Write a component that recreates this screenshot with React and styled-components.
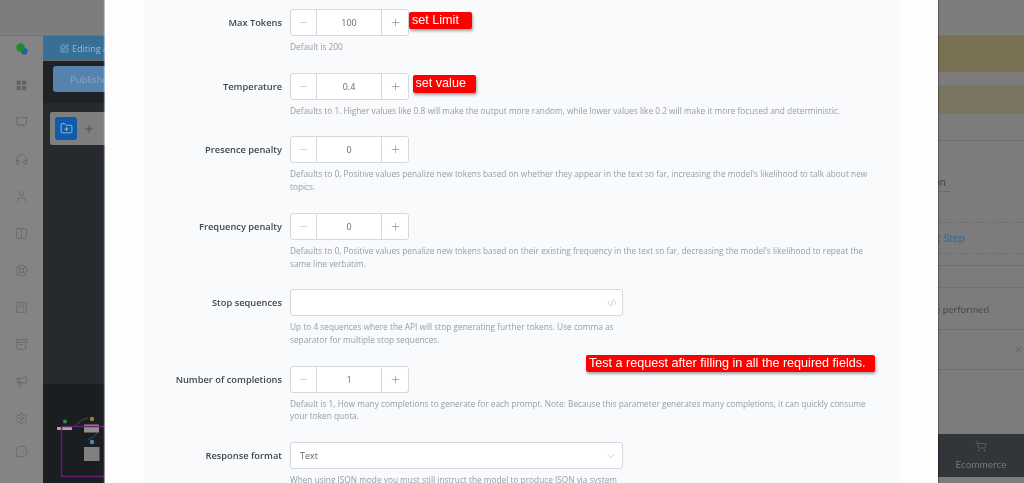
import React from "react";
import styled, { createGlobalStyle } from "styled-components";
import {
  Minus, Plus, CodeXml, ChevronDown, Presentation, Headphones, User, Columns2,
  LifeBuoy, SquareKanban, Archive, Megaphone, Settings, MessageCircleMore, ShoppingCart, X, FolderPlus, SquarePen,
} from "lucide-react";

const Global = createGlobalStyle`
  html, body { margin: 0; padding: 0; background: #808080; }
  * { box-sizing: border-box; }
`;

const Page = styled.div`
  position: relative;
  width: 1024px;
  height: 483px;
  overflow: hidden;
  font-family: "Open Sans", "Noto Sans", sans-serif;
  background: #7f7f7f;
  filter: blur(0.55px);
`;

const Backdrop = styled.div`
  display: grid;
  grid-template-rows: 36px 1fr;
  height: 100%;
`;
const TopBar = styled.div`
  background: #7d7d7d;
  border-bottom: 1px solid #747474;
`;
const Body = styled.div`
  display: grid;
  grid-template-columns: 43px 1fr 170px;
  min-height: 0;
`;
const Sidebar = styled.nav`
  background: #848484;
  display: flex;
  flex-direction: column;
  align-items: center;
  color: #626568;
`;
const SideItem = styled.div`
  height: ${(p) => p.$h || 37}px;
  margin-bottom: ${(p) => p.$mb || 0}px;
  flex: none;
  display: flex;
  align-items: center;
  justify-content: center;
`;
const Editor = styled.div`
  display: flex;
  flex-direction: column;
  min-width: 0;
  background: #26292d;
`;
const EditingBar = styled.div`
  height: 24px;
  flex: none;
  background: #386f96;
  color: #a4b9c9;
  font-size: 9px;
  display: flex;
  align-items: center;
  gap: 3px;
  padding-left: 17px;
  white-space: nowrap;
  overflow: hidden;
`;
const Toolbar = styled.div`
  height: 43px;
  flex: none;
  border-top: 1px solid #6a6a6a;
  background: #1f2225;
  padding: 5px 10px;
`;
const PublishButton = styled.div`
  width: 100px;
  height: 26px;
  border-radius: 3px;
  background: #5583ad;
  color: #8aa8c4;
  font-size: 9.5px;
  display: flex;
  align-items: center;
  padding-left: 17px;
`;
const Canvas = styled.div`
  flex: 1;
  padding: 9px 7px;
`;
const Tools = styled.div`
  width: 90px;
  height: 33px;
  background: #7f7f7f;
  border-radius: 2px;
  display: flex;
  align-items: center;
  gap: 6px;
  padding-left: 5px;
  color: #34373a;
`;
const FolderButton = styled.div`
  width: 22px;
  height: 23px;
  background: #0e5cad;
  border-radius: 3px;
  color: #b5c9de;
  display: flex;
  align-items: center;
  justify-content: center;
`;
const MiniMap = styled.div`
  height: 99px;
  flex: none;
  background: #1b1e21;
  svg { display: block; }
`;
const RightPanel = styled.aside`
  display: flex;
  flex-direction: column;
  background: #7c7c7c;
  color: #4a4a4a;
  font-size: 10px;
  font-family: "Lato", sans-serif;
`;
const Banner = styled.div`
  flex: none;
  height: ${(p) => p.$h}px;
  margin-bottom: ${(p) => p.$mb}px;
  background: ${(p) => p.$bg};
`;
const Section = styled.div`
  flex: none;
  height: ${(p) => p.$h}px;
  border-top: 1px ${(p) => p.$kind || "solid"} ${(p) => p.$line || "#6e6e6e"};
  display: flex;
  align-items: center;
  justify-content: flex-end;
  padding-right: ${(p) => p.$pr || 0}px;
  padding-bottom: ${(p) => p.$pb || 0}px;
  white-space: nowrap;
`;
const Condition = styled.span`
  border-bottom: 1px solid #6b6b6b;
  padding: 4px 4px 3px 40px;
  margin-right: 74px;
  font-size: 11px;
`;
const NextStep = styled.span`
  color: #3a6794;
  font-size: 11px;
`;
const EcommerceCard = styled.div`
  flex: none;
  height: 43px;
  margin-top: 5px;
  margin-left: 84px;
  background: #32363b;
  color: #74777b;
  font-size: 10px;
  line-height: 14px;
  display: flex;
  flex-direction: column;
  align-items: center;
  justify-content: center;
  gap: 5px;
`;

const Modal = styled.div`
  position: absolute;
  left: 105px;
  top: 0;
  width: 833px;
  height: 100%;
  background: #fdfdfe;
  overflow: hidden;
  padding: 0 38px 0 40px;
  box-shadow: -1px 0 1px rgba(255, 255, 255, 0.5), 1px 0 1px rgba(0, 0, 0, 0.25);
`;
const FormPanel = styled.div`
  background: #f9fafc;
  height: 100%;
  padding-top: 9px;
  color: #43484e;
`;
const Row = styled.div`
  display: grid;
  grid-template-columns: 137px 1fr;
  column-gap: 8px;
  margin-bottom: 19px;
`;
const Label = styled.label`
  font-size: 9.3px;
  font-weight: 600;
  color: #42474d;
  text-align: right;
  line-height: 27px;
  white-space: nowrap;
`;
const Help = styled.p`
  grid-column: 2;
  margin: 5px 0 0;
  font-size: 8.3px;
  line-height: 12.7px;
  color: #969ca4;
  max-width: ${(p) => p.$w || 585}px;
`;
const Stepper = styled.div`
  display: grid;
  grid-template-columns: 25px 66px 26px;
  width: 119px;
  height: 27px;
  background: #fff;
  border: 1px solid #d5d8dd;
  border-radius: 3px;
`;
const StepButton = styled.div`
  display: flex;
  align-items: center;
  justify-content: center;
  color: ${(p) => (p.$muted ? "#b3b7bd" : "#6d7278")};
`;
const StepValue = styled.div`
  border-left: 1px solid #d5d8dd;
  border-right: 1px solid #d5d8dd;
  display: flex;
  align-items: center;
  justify-content: center;
  font-size: 9px;
  color: #666b71;
`;
const WideField = styled.div`
  width: 333px;
  height: 27px;
  background: #fff;
  border: 1px solid #d5d8dd;
  border-radius: 3px;
  display: flex;
  align-items: center;
  justify-content: space-between;
  padding: 0 5px 0 9px;
  font-size: 9px;
  color: #5c6167;
`;
const FieldIcon = styled.span`
  display: flex;
  color: #a9adb3;
`;
const Note = styled.div`
  position: absolute;
  left: ${(p) => p.$x}px;
  top: ${(p) => p.$y}px;
  height: ${(p) => p.$h}px;
  width: ${(p) => p.$w}px;
  background: #ff0000;
  color: #fff;
  border-radius: 2px;
  font-family: "Liberation Sans", Arial, sans-serif;
  font-size: ${(p) => p.$fs}px;
  line-height: ${(p) => p.$h - 1}px;
  padding-left: 3px;
  white-space: nowrap;
  box-shadow: 1px 2px 3px rgba(0, 0, 0, 0.35);
`;

const GridIcon = () => (
  <svg width="11" height="11" viewBox="0 0 11 11" fill="currentColor">
    <rect x="0.500" y="0.500" width="4.300" height="4.300" rx="0.800" />
    <rect x="6" y="0.500" width="4.300" height="4.300" rx="0.800" />
    <rect x="0.500" y="6" width="4.300" height="4.300" rx="0.800" />
    <rect x="6" y="6" width="4.300" height="4.300" rx="0.800" />
  </svg>
);

const sideIcons = [Presentation, Headphones, User, Columns2, LifeBuoy, SquareKanban, Archive, Megaphone, Settings];

const Logo = () => (
  <svg width="12" height="12" viewBox="0 0 12 12">
    <circle cx="8.300" cy="8.300" r="3.400" fill="#1f62a8" />
    <circle cx="4.500" cy="4.500" r="4.200" fill="#1c8a2e" />
  </svg>
);

const Field = ({ label, help, w, children }) => (
  <Row>
    <Label>{label}</Label>
    <div>{children}</div>
    <Help $w={w}>{help}</Help>
  </Row>
);

const Step = ({ value }) => (
  <Stepper>
    <StepButton $muted><Minus size={11} strokeWidth={1.2} /></StepButton>
    <StepValue>{value}</StepValue>
    <StepButton><Plus size={11} strokeWidth={1.2} /></StepButton>
  </Stepper>
);

export default function App() {
  return (
    <Page>
      <Global />
      <Backdrop>
        <TopBar />
        <Body>
          <Sidebar>
            <SideItem $h={25} $mb={5.5}><Logo /></SideItem>
            <SideItem><GridIcon /></SideItem>
            {sideIcons.map((Icon, i) => (
              <SideItem key={i}><Icon size={13} strokeWidth={1.4} /></SideItem>
            ))}
            <SideItem $h={30}><MessageCircleMore size={13} strokeWidth={1.4} /></SideItem>
          </Sidebar>
          <Editor>
            <EditingBar><SquarePen size={9} />Editing a flow</EditingBar>
            <Toolbar><PublishButton>Published</PublishButton></Toolbar>
            <Canvas>
              <Tools>
                <FolderButton><FolderPlus size={13} strokeWidth={1.5} /></FolderButton>
                <Plus size={12} strokeWidth={1.2} />
              </Tools>
            </Canvas>
            <MiniMap>
              <svg width="62" height="99" viewBox="0 0 62 99">
                <path d="M32 42 C36 38 39 35 45 34 M54 49 C52 53 47 54 45 56" stroke="#55585c" strokeWidth="0.8" fill="none" />
                <circle cx="22" cy="37.500" r="2" fill="#2f8f3f" />
                <rect x="14" y="43" width="15" height="3" fill="#a8a8a8" />
                <circle cx="49" cy="35" r="2.200" fill="#9a7d35" />
                <rect x="41" y="40.500" width="15" height="8" fill="#8f8f8f" />
                <circle cx="49" cy="58" r="2.200" fill="#4f86b8" />
                <rect x="41" y="63" width="15.500" height="14" fill="#808080" />
                <rect x="18.500" y="42.500" width="44" height="50" fill="none" stroke="#701a7c" strokeWidth="1.400" />
              </svg>
            </MiniMap>
          </Editor>
          <RightPanel>
            <Banner $h={36} $mb={13} $bg="#7a7052" />
            <Banner $h={29} $mb={26} $bg="#7a7560" />
            <Section $h={82}><Condition>Condition</Condition></Section>
            <Section $h={31} $kind="dashed" $pr={59} $pb={2}><NextStep>Add Next Step</NextStep></Section>
            <Section $h={12} $kind="dashed" />
            <Section $h={22} />
            <Section $h={42} $line="#707070" $pr={35}>Action to be performed</Section>
            <Section $h={40} $line="#66727a"><X size={11} strokeWidth={1.2} /></Section>
            <Section $h={60} $line="#647568" />
            <EcommerceCard>
              <ShoppingCart size={12} strokeWidth={1.2} />
              Ecommerce
            </EcommerceCard>
          </RightPanel>
        </Body>
      </Backdrop>

      <Modal>
        <FormPanel>
          <Field label="Max Tokens" help="Default is 200"><Step value="100" /></Field>
          <Field label="Temperature" help="Defaults to 1. Higher values like 0.8 will make the output more random, while lower values like 0.2 will make it more focused and deterministic."><Step value="0.4" /></Field>
          <Field label="Presence penalty" help="Defaults to 0, Positive values penalize new tokens based on whether they appear in the text so far, increasing the model's likelihood to talk about new topics."><Step value="0" /></Field>
          <Field label="Frequency penalty" help="Defaults to 0, Positive values penalize new tokens based on their existing frequency in the text so far, decreasing the model's likelihood to repeat the same line verbatim."><Step value="0" /></Field>
          <Field label="Stop sequences" w={333} help="Up to 4 sequences where the API will stop generating further tokens. Use comma as separator for multiple stop sequences.">
            <WideField><span /><FieldIcon><CodeXml size={10} strokeWidth={1.4} /></FieldIcon></WideField>
          </Field>
          <Field label="Number of completions" help="Default is 1, How many completions to generate for each prompt. Note: Because this parameter generates many completions, it can quickly consume your token quota."><Step value="1" /></Field>
          <Field label="Response format" w={333} help="When using JSON mode you must still instruct the model to produce JSON via system">
            <WideField>Text<FieldIcon><ChevronDown size={12} strokeWidth={1.1} /></FieldIcon></WideField>
          </Field>
        </FormPanel>
      </Modal>

      <Note $x={409} $y={12} $w={63} $h={17} $fs={12.6}>set Limit</Note>
      <Note $x={412.500} $y={75} $w={63} $h={18} $fs={12.6}>set value</Note>
      <Note $x={586} $y={355} $w={289} $h={17} $fs={12.6}>Test a request after filling in all the required fields.</Note>
    </Page>
  );
}
